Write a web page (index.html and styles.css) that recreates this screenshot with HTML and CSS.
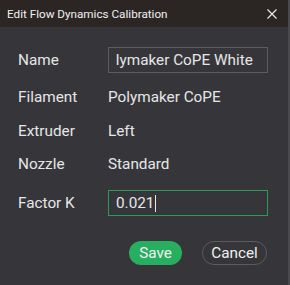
FILE: index.html
```html
<!DOCTYPE html>
<html lang="en">
<head>
    <meta charset="UTF-8">
    <title>Edit Flow Dynamics Calibration</title>
    <link rel="stylesheet" href="styles.css">
</head>
<body>
    <div class="dialog">
        <div class="title-bar">
            <span class="title">Edit Flow Dynamics Calibration</span>
            <svg class="close" width="10" height="10" viewBox="0 0 10 10">
                <path d="M0.5 0.5 L9.5 9.5 M9.5 0.5 L0.5 9.5" stroke="#e8e8e8" stroke-width="1.2" fill="none"/>
            </svg>
        </div>
        <div class="content">
            <div class="row name-row">
                <span class="label">Name</span>
                <div class="field"><div class="clip"><span class="scroll">Polymaker CoPE White</span></div></div>
            </div>
            <div class="row">
                <span class="label">Filament</span>
                <span class="value">Polymaker CoPE</span>
            </div>
            <div class="row extruder-row">
                <span class="label">Extruder</span>
                <span class="value">Left</span>
            </div>
            <div class="row nozzle-row">
                <span class="label">Nozzle</span>
                <span class="value">Standard</span>
            </div>
            <div class="row">
                <span class="label">Factor K</span>
                <div class="field active">0.021<span class="caret"></span></div>
            </div>
            <div class="buttons">
                <button class="btn save">Save</button>
                <button class="btn cancel">Cancel</button>
            </div>
        </div>
    </div>
</body>
</html>
```

FILE: styles.css
```css
body {
    margin: 0;
    font-family: Roboto, "Noto Sans", sans-serif;
    background-color: #36363a;
}
.dialog {
    width: 290px;
    height: 285px;
    display: flex;
    flex-direction: column;
    background-color: #36363a;
    border-right: 2px solid #4a4a4e;
    box-sizing: border-box;
}
.title-bar {
    height: 27px;
    background-color: #2b2624;
    display: flex;
    align-items: center;
    justify-content: space-between;
    padding: 0 11px 0 7px;
    color: #f0f0f0;
}
.title {
    font-size: 11.7px;
}
.content {
    padding: 20px 0 0 18px;
    color: #e6e6e6;
    font-size: 15.3px;
}
.row {
    display: flex;
    align-items: center;
    height: 26px;
    margin-bottom: 8px;
}
.name-row {
    margin-bottom: 11px;
}
.extruder-row {
    margin-bottom: 7px;
}
.nozzle-row {
    margin-bottom: 13px;
}
.label {
    width: 90px;
}
.field {
    width: 160px;
    height: 26px;
    box-sizing: border-box;
    border: 1px solid #5c5c60;
    padding: 0 7px;
    display: flex;
    align-items: center;
    white-space: nowrap;
}
.clip {
    flex: 1;
    overflow: hidden;
}
.scroll {
    display: inline-block;
    margin-left: -18.5px;
}
.field.active {
    border-color: #2e9a5a;
}
.caret {
    display: inline-block;
    width: 1px;
    height: 17px;
    background-color: #e6e6e6;
    margin-left: 1px;
}
.buttons {
    display: flex;
    justify-content: flex-end;
    gap: 20px;
    padding-right: 21px;
    margin-top: 25px;
}
.btn {
    height: 24px;
    border-radius: 12px;
    font-family: Roboto, "Noto Sans", sans-serif;
    font-size: 15.3px;
    padding: 0 8px;
    color: #f0f0f0;
}
.save {
    width: 53px;
    background-color: #27ae60;
    border: none;
}
.cancel {
    width: 65px;
    background-color: transparent;
    border: 1px solid #5c5c60;
}
```
